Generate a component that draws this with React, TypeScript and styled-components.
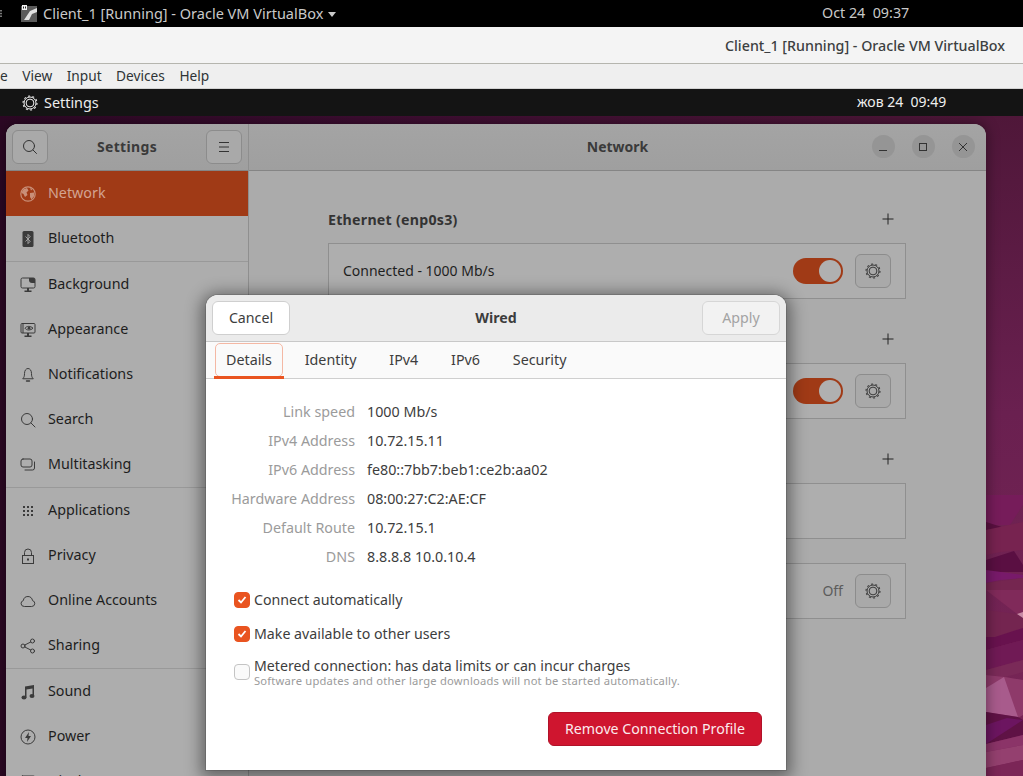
import React from "react";
import styled, { createGlobalStyle } from "styled-components";

const Global = createGlobalStyle`
  html, body { margin: 0; padding: 0; background: #000; overflow: hidden; }
  * { box-sizing: border-box; }
  body { font-family: "Noto Sans", "Liberation Sans", sans-serif; font-size: 14px; }
`;

const Screen = styled.div`
  width: 1023px; height: 776px; overflow: hidden;
  display: flex; flex-direction: column;
`;
const HostBar = styled.div`
  height: 27px; flex: none; background: #000; color: #c9c9c9;
  display: flex; align-items: center; position: relative;
  font-size: 14.5px; padding-left: 21px;
`;
const EdgeDots = styled.svg`position: absolute; left: 0; top: 10px; width: 2px; height: 7px;`;
const HostTitle = styled.span`margin: 0 0 2px 6px; white-space: nowrap;`;
const HostClock = styled.span`
  position: absolute; left: 822px; top: 3px; font-size: 14.3px; white-space: pre;
`;
const Caret = styled.span`
  width: 0; height: 0; margin-left: 5px; margin-top: 1px;
  border-left: 4.5px solid transparent; border-right: 4.5px solid transparent; border-top: 5px solid #c9c9c9;
`;
const TitleBar = styled.div`
  height: 37px; flex: none; background: #f4f4f4; border-bottom: 1px solid #b5b5ae;
  display: flex; align-items: center; justify-content: flex-end; padding-right: 18px;
  color: #3c3f41; font-size: 14.25px; font-weight: 500;
`;
const MenuBar = styled.div`
  height: 25px; flex: none; background: #efefef; border-bottom: 1px solid #d2d2d2;
  display: flex; align-items: center; gap: 14.5px; color: #2e3436; font-size: 13.7px;
  overflow: hidden; padding-bottom: 2px;
`;
const GuestBar = styled.div`
  height: 27px; flex: none; background: #141414; color: #eee; position: relative;
  display: flex; align-items: center; padding-left: 22px; gap: 6px; font-size: 14.4px;
`;
const GuestClock = styled.span`
  position: absolute; left: 857px; top: 3px; font-size: 14px; white-space: pre;
`;
const Desktop = styled.div`
  flex: 1; position: relative; overflow: hidden; padding: 8px 0 0 6px;
  background: linear-gradient(90deg, #2c0824 0%, #3d0d31 35%, #4f1739 95%);
`;
const Wallpaper = styled.svg`
  position: absolute; right: 0; top: 0; width: 37px; height: 660px; display: block;
`;
const Window = styled.div`
  position: relative; width: 980px; height: 700px; background: #ababab;
  border-radius: 12px 12px 0 0; display: flex; overflow: hidden;
  box-shadow: 0 0 14px rgba(0, 0, 0, 0.45);
`;
const Sidebar = styled.div`
  width: 243px; flex: none; background: #adadad; border-right: 1px solid #8f8f8f;
`;
const HeaderBar = styled.div`
  height: 47px; background: linear-gradient(#a4a4a4, #9f9f9f); border-bottom: 1px solid #858585;
  display: flex; align-items: center; justify-content: space-between;
  position: relative; color: #3a3a3a; font-weight: 700; font-size: 14px;
`;
const SidebarHeader = styled(HeaderBar)`padding: 0 6px;`;
const MainHeader = styled(HeaderBar)`justify-content: center;`;
const HeaderTitle = styled.span`
  position: absolute; left: 0; right: 0; margin-top: -2px; text-align: center; pointer-events: none;
  letter-spacing: 0.35px;
`;
const MainHeaderTitle = styled(HeaderTitle)`left: 0; letter-spacing: 0;`;
const IconButton = styled.div`
  width: 36px; height: 34px; border: 1px solid #8c8c8c; border-radius: 6px;
  background: #a9a9a9; color: #333; flex: none; display: flex; align-items: center; justify-content: center;
`;
const WindowButtons = styled.div`
  position: absolute; right: 11.5px; top: 11px; display: flex; gap: 17px;
`;
const WindowButton = styled.div`
  width: 23px; height: 23px; border-radius: 50%; background: #959595; color: #333;
  display: flex; align-items: center; justify-content: center;
`;
const NavRow = styled.div<{ $active?: boolean }>`
  height: 45px; display: flex; align-items: center; gap: 12px; padding-left: 14px;
  color: ${(p) => (p.$active ? "#d3a391" : "#1d1d1d")};
  background: ${(p) => (p.$active ? "#a03a16" : "transparent")};
  font-size: 14.3px;
  svg { width: 16px; height: 16px; flex: none; color: ${(p) => (p.$active ? "#c98f78" : "#3b3b3b")}; }
`;
const NavLabel = styled.span`margin-bottom: 2px;`;
const NavSeparator = styled.div`height: 1px; background: #999;`;
const Main = styled.div`flex: 1; min-width: 0;`;
const Content = styled.div`padding: 36px 0 0 79px; width: 657px;`;
const Section = styled.div<{ $gap: number }>`margin-bottom: ${(p) => p.$gap}px;`;
const SectionHead = styled.div`
  height: 24px; margin-bottom: 12px; display: flex; align-items: center; justify-content: space-between;
  font-weight: 700; color: #333; font-size: 14.2px; letter-spacing: 0.25px; padding-right: 12px;
`;
const PlusIcon = styled.svg`width: 12px; height: 12px; display: block;`;
const Card = styled.div`
  height: 56px; border: 1px solid #8f8f8f; background: #aeaeae;
  display: flex; align-items: center; justify-content: space-between; padding: 0 14px;
  color: #1f1f1f; font-size: 14px;
`;
const CardLabel = styled.span`margin-bottom: 2px;`;
const CardActions = styled.div`display: flex; align-items: center; gap: 12px;`;
const OffText = styled.span`color: #5c5c5c; margin-bottom: 2px;`;
const Toggle = styled.div`
  width: 50px; height: 26px; border-radius: 13px; background: #a03a16; padding: 2px;
  display: flex; justify-content: flex-end;
`;
const Knob = styled.div`width: 22px; height: 22px; border-radius: 50%; background: #b0b0b0;`;

const Dialog = styled.div`
  position: absolute; left: 206px; top: 179px; width: 580px; height: 475px;
  background: #fff; border-radius: 12px 12px 0 0; color: #3d3d3d;
  box-shadow: 0 3px 16px 5px rgba(0, 0, 0, 0.42), 0 0 0 1px rgba(0, 0, 0, 0.12);
  display: flex; flex-direction: column; overflow: hidden;
`;
const DialogHeader = styled.div`
  height: 47px; flex: none; background: #ebebeb; border-bottom: 1px solid #c8c8c8; position: relative;
  display: flex; align-items: center; justify-content: space-between; padding: 0 6px;
`;
const DialogTitle = styled.span`
  position: absolute; left: 0; right: 0; margin-top: -2px; text-align: center;
  font-weight: 700; font-size: 14.2px; color: #3d3d3d;
`;
const DialogButton = styled.div<{ $disabled?: boolean }>`
  width: 78px; height: 34px; border-radius: 6px; background: ${(p) => (p.$disabled ? "#f2f2f2" : "#fff")};
  border: 1px solid ${(p) => (p.$disabled ? "#d6d6d6" : "#cfcfcf")};
  color: ${(p) => (p.$disabled ? "#a3a3a3" : "#3d3d3d")};
  display: flex; align-items: center; justify-content: center; font-size: 14.2px; padding-bottom: 2px;
`;
const Tabs = styled.div`
  height: 37px; flex: none; background: #fafafa; border-bottom: 1px solid #cfcfcf;
  display: flex; gap: 8.8px; padding-left: 8px;
`;
const Tab = styled.div<{ $active?: boolean }>`
  height: 37px; padding: 0 12px 2px; display: flex; align-items: center; position: relative;
  font-size: 14.3px; color: #3d3d3d;
  ${(p) =>
    p.$active &&
    `
    &::before { content: ""; position: absolute; left: 1px; right: 1px; top: 1px; bottom: 2px;
      border: 1px solid #f4b8a4; border-radius: 5px; }
    &::after { content: ""; position: absolute; left: 0; right: 0; bottom: 0; height: 3px; background: #e95420; }
  `}
`;
const DetailGrid = styled.div`
  display: grid; grid-template-columns: 149px 1fr; column-gap: 12px; grid-auto-rows: 29px;
  align-items: center; padding-top: 18px; font-size: 14.3px;
`;
const DetailLabel = styled.span`text-align: right; color: #9b9b9b;`;
const DetailValue = styled.span`color: #3d3d3d;`;
const Checks = styled.div`margin-top: 12px; padding-left: 28px;`;
const CheckRow = styled.div<{ $tall?: boolean }>`
  height: ${(p) => (p.$tall ? 42 : 34)}px; display: flex; align-items: center; gap: 4px; font-size: 14.2px;
`;
const CheckBox = styled.div<{ $on?: boolean }>`
  width: 16px; height: 16px; border-radius: 4px; flex: none;
  background: ${(p) => (p.$on ? "#e95420" : "#fafafa")};
  border: 1px solid ${(p) => (p.$on ? "#e95420" : "#c4c4c4")};
  display: flex; align-items: center; justify-content: center;
`;
const CheckLabel = styled.span`margin-bottom: 2px;`;
const CheckText = styled.div`display: flex; flex-direction: column; line-height: 15px; margin-top: 2px; font-size: 14.15px;`;
const CheckHint = styled.span`font-size: 11.2px; letter-spacing: 0.2px; color: #9b9b9b;`;
const Footer = styled.div`margin-top: 19px; padding-right: 24px; display: flex; justify-content: flex-end;`;
const DangerButton = styled.div`
  width: 214px; height: 34px; border-radius: 6px; background: #cf152f; border: 1px solid #b01228;
  color: #fbeaed; font-size: 14.2px; display: flex; align-items: center; justify-content: center; padding-bottom: 2px;
`;

const Stroke = ({ children }: { children: React.ReactNode }) => (
  <svg viewBox="0 0 16 16" fill="none" stroke="currentColor" strokeWidth="1" strokeLinecap="round" strokeLinejoin="round">
    {children}
  </svg>
);

const Gear = ({ color = "#3a3a3a" }: { color?: string }) => (
  <svg width="16" height="16" viewBox="0 0 16 16" fill="none" stroke={color}>
    <circle cx="8" cy="8" r="7" strokeWidth="1.1" strokeDasharray="2 2.4" />
    <circle cx="8" cy="8" r="6" strokeWidth="1" />
    <circle cx="8" cy="8" r="3.9" strokeWidth="1" />
  </svg>
);

const Tick = () => (
  <svg width="10" height="10" viewBox="0 0 10 10" fill="none" stroke="#fff" strokeWidth="1.8">
    <path d="M1.5 5 L4 7.5 L8.5 2" />
  </svg>
);

const Plus = () => (
  <PlusIcon viewBox="0 0 12 12" stroke="#222">
    <path d="M6 .5v11M.5 6h11" />
  </PlusIcon>
);

const icons: Record<string, React.ReactNode> = {
  Network: (
    <svg viewBox="0 0 16 16">
      <circle cx="8" cy="8" r="7.2" fill="none" stroke="currentColor" strokeWidth="1.2" />
      <path d="M3 3.5 L7 2 L8.5 4.5 L6.5 6.5 L7.5 9 L5 11 L3.5 8 L1.5 7Z M10 7 L14 6.5 L14.2 10 L11.5 13.5 L10 11Z M10 2 L12.5 3 L11 4.5Z" fill="currentColor" />
    </svg>
  ),
  Bluetooth: (
    <svg viewBox="0 0 16 16">
      <rect x="2.5" y="0" width="11" height="16" rx="1.5" fill="currentColor" />
      <path d="M5.5 5.5 L10.2 10.3 L8 12.6 V3.4 L10.2 5.7 L5.5 10.5" fill="none" stroke="#adadad" strokeWidth="0.9" />
    </svg>
  ),
  Background: (
    <svg viewBox="0 0 16 16">
      <path d="M2.5 1h11A1.5 1.5 0 0 1 15 2.5v7a1.5 1.5 0 0 1-1.5 1.5h-11A1.5 1.5 0 0 1 1 9.5v-7A1.5 1.5 0 0 1 2.5 1Z" fill="none" stroke="currentColor" />
      <path d="M9 1h4.5A1.5 1.5 0 0 1 15 2.5V6h-3a3 3 0 0 1-3-3Z" fill="currentColor" />
      <path d="M7 11h2v2.5H7ZM4.5 13.5h7V15h-7Z" fill="currentColor" />
    </svg>
  ),
  Appearance: (
    <svg viewBox="0 0 16 16">
      <rect x="1" y="1.5" width="14" height="9.5" rx="1" fill="none" stroke="currentColor" />
      <path d="M3 1.5v9.5" stroke="currentColor" strokeDasharray="1 1" strokeWidth="2" />
      <path d="M5 6.2c1.5-2.4 5.5-2.4 8 0c-2.5 2.4-6.5 2.4-8 0Z" fill="none" stroke="currentColor" />
      <circle cx="9" cy="6.2" r="1.4" fill="currentColor" />
      <path d="M7 11h2v2.5H7ZM4.5 13.5h7V15h-7Z" fill="currentColor" />
    </svg>
  ),
  Notifications: (
    <Stroke>
      <path d="M3 11.5c1.2-1.2 1.5-2.5 1.5-5C4.5 3.5 6 1.5 8 1.5s3.5 2 3.5 5c0 2.5.3 3.8 1.5 5Z" />
      <path d="M6.5 14h3" strokeWidth="1.4" />
    </Stroke>
  ),
  Search: (
    <Stroke>
      <circle cx="7" cy="7" r="5.5" />
      <path d="M11 11 L15 15" />
    </Stroke>
  ),
  Multitasking: (
    <Stroke>
      <rect x="1" y="2" width="11" height="8" rx="2" />
      <path d="M14.5 5v6a2 2 0 0 1-2 2H5" />
    </Stroke>
  ),
  Applications: (
    <svg viewBox="0 0 16 16" fill="currentColor">
      {[3, 7, 11].flatMap((y) =>
        [3, 7, 11].map((x) => <rect key={`${x}-${y}`} x={x} y={y} width="2" height="2" />)
      )}
    </svg>
  ),
  Privacy: (
    <svg viewBox="0 0 16 16" fill="none" stroke="currentColor">
      <rect x="2.5" y="7.5" width="11" height="8" />
      <path d="M4.5 7.5V4.5a3.5 3.5 0 0 1 7 0v3" />
      <rect x="7" y="10.5" width="2" height="2" fill="currentColor" stroke="none" />
    </svg>
  ),
  "Online Accounts": (
    <Stroke>
      <path d="M4 13.5a3 3 0 0 1-.7-5.9A4.8 4.8 0 0 1 8 3.5c2.5 0 4.2 1.7 4.5 4.1a3 3 0 0 1-.5 5.9Z" />
    </Stroke>
  ),
  Sharing: (
    <Stroke>
      <circle cx="3" cy="8" r="2" />
      <circle cx="12.5" cy="3" r="2" />
      <circle cx="12.5" cy="13" r="2" />
      <path d="M4.8 7 L10.7 4 M4.8 9 L10.7 12" />
    </Stroke>
  ),
  Sound: (
    <svg viewBox="0 0 16 16" fill="currentColor">
      <path d="M5 2.5 14 1v10.5h-1.5V4.5L6.5 5.5V13.5H5Z" />
      <ellipse cx="4" cy="13.5" rx="2.5" ry="2" />
      <ellipse cx="12" cy="12" rx="2.5" ry="2" />
    </svg>
  ),
  Power: (
    <svg viewBox="0 0 16 16">
      <circle cx="8" cy="8" r="7" fill="none" stroke="currentColor" />
      <path d="M9 3 L5 9 H7.5 L7 13 L11 7 H8.5Z" fill="currentColor" />
    </svg>
  ),
  Displays: (
    <Stroke>
      <rect x="1" y="2" width="14" height="9" rx="1.5" />
    </Stroke>
  ),
};

const navGroups = [
  ["Network", "Bluetooth"],
  ["Background", "Appearance", "Notifications", "Search", "Multitasking"],
  ["Applications", "Privacy", "Online Accounts", "Sharing"],
  ["Sound", "Power", "Displays"],
];

const details: [string, string][] = [
  ["Link speed", "1000 Mb/s"],
  ["IPv4 Address", "10.72.15.11"],
  ["IPv6 Address", "fe80::7bb7:beb1:ce2b:aa02"],
  ["Hardware Address", "08:00:27:C2:AE:CF"],
  ["Default Route", "10.72.15.1"],
  ["DNS", "8.8.8.8 10.0.10.4"],
];

const facets: [string, string][] = [
  ["0,379 37,379 37,389 24,409 0,409", "#761c5a"],
  ["0,406 19,412 0,414", "#5a1040"],
  ["0,414 37,406 37,434 14,436 0,439", "#772350"],
  ["0,444 28,435 37,449 37,456 0,456", "#5a0f42"],
  ["0,454 37,459 37,462 14,464 0,467", "#781a6a"],
  ["0,467 37,462 37,474 0,474", "#752650"],
  ["0,474 37,474 37,499 31,498", "#802a5a"],
  ["0,494 31,498 37,502 37,512 9,521 0,521", "#742550"],
  ["31,498 37,496 37,502", "#c88aa5"],
  ["9,521 37,512 37,524 0,534 0,521", "#68124e"],
  ["0,534 37,524 37,544 0,554", "#701a55"],
  ["0,554 37,544 37,556 19,561 0,559", "#7a2a58"],
  ["0,559 19,561 37,564 37,599 32,602 0,596", "#8e3a6a"],
  ["0,572 18,561 32,601 0,596", "#a85b8c"],
  ["0,596 32,601 37,604 37,619 0,628", "#5f1245"],
  ["0,609 21,602 37,604 0,628", "#6c1560"],
  ["0,628 37,619 37,629 0,636", "#8b3468"],
  ["0,636 37,629 37,644 0,652", "#94406f"],
  ["0,652 37,644 37,660 0,660", "#7b2657"],
];

export default function App() {
  return (
    <Screen>
      <Global />
      <HostBar>
        <EdgeDots viewBox="0 0 2 7" fill="#777">
          <rect width="2" height="1.5" />
          <rect y="2.8" width="2" height="1.5" />
          <rect y="5.5" width="2" height="1.5" />
        </EdgeDots>
        <svg width="16" height="17" viewBox="0 0 16 17">
          <rect x="0" y="1" width="16" height="16" fill="#5a5a5a" />
          <path d="M3 15 L7 9 L9 6 L16 3 V7 L11 9 L8 15Z" fill="#e0e0e0" />
          <rect x="1" y="0" width="5" height="5" fill="#f2f2f2" />
          <rect x="2" y="1.5" width="1" height="2" fill="#222" />
          <rect x="4" y="1.5" width="1" height="2" fill="#222" />
        </svg>
        <HostTitle>Client_1 [Running] - Oracle VM VirtualBox</HostTitle>
        <Caret />
        <HostClock>Oct 24  09:37</HostClock>
      </HostBar>
      <TitleBar>Client_1 [Running] - Oracle VM VirtualBox</TitleBar>
      <MenuBar>
        <span>e</span>
        <span>View</span>
        <span>Input</span>
        <span>Devices</span>
        <span>Help</span>
      </MenuBar>
      <GuestBar>
        <Gear color="#f0f0f0" />
        <span>Settings</span>
        <GuestClock>жов 24  09:49</GuestClock>
      </GuestBar>
      <Desktop>
        <Wallpaper viewBox="0 0 37 660" preserveAspectRatio="none">
          <defs>
            <linearGradient id="wall" x1="0" y1="0" x2="0" y2="1">
              <stop offset="0" stopColor="#4f1739" />
              <stop offset="0.45" stopColor="#6a2050" />
              <stop offset="1" stopColor="#7a2657" />
            </linearGradient>
          </defs>
          <rect width="37" height="660" fill="url(#wall)" />
          {facets.map(([points, fill]) => (
            <polygon key={points} points={points} fill={fill} />
          ))}
        </Wallpaper>
        <Window>
          <Sidebar>
            <SidebarHeader>
              <IconButton>
                <svg width="16" height="16" viewBox="0 0 16 16" fill="none" stroke="currentColor" strokeLinecap="round">
                  <circle cx="7" cy="7" r="5.5" />
                  <path d="M11 11 L14.5 14.5" />
                </svg>
              </IconButton>
              <HeaderTitle>Settings</HeaderTitle>
              <IconButton>
                <svg width="12" height="12" viewBox="0 0 12 12" stroke="currentColor">
                  <path d="M1 1.5h10M1 6h10M1 10.5h10" />
                </svg>
              </IconButton>
            </SidebarHeader>
            {navGroups.map((group, i) => (
              <React.Fragment key={group[0]}>
                {i > 0 && <NavSeparator />}
                {group.map((name) => (
                  <NavRow key={name} $active={name === "Network"}>
                    {icons[name]}
                    <NavLabel>{name}</NavLabel>
                  </NavRow>
                ))}
              </React.Fragment>
            ))}
          </Sidebar>
          <Main>
            <MainHeader>
              <MainHeaderTitle>Network</MainHeaderTitle>
              <WindowButtons>
                <WindowButton>
                  <svg width="12" height="12" viewBox="0 0 12 12" stroke="currentColor"><path d="M2 9.5h8" /></svg>
                </WindowButton>
                <WindowButton>
                  <svg width="12" height="12" viewBox="0 0 12 12" fill="none" stroke="currentColor"><rect x="2.5" y="2.5" width="7" height="7" /></svg>
                </WindowButton>
                <WindowButton>
                  <svg width="12" height="12" viewBox="0 0 12 12" stroke="currentColor"><path d="M2 2 L10 10 M10 2 L2 10" /></svg>
                </WindowButton>
              </WindowButtons>
            </MainHeader>
            <Content>
              <Section $gap={28}>
                <SectionHead>
                  <span>Ethernet (enp0s3)</span>
                  <Plus />
                </SectionHead>
                <Card>
                  <CardLabel>Connected - 1000 Mb/s</CardLabel>
                  <CardActions>
                    <Toggle><Knob /></Toggle>
                    <IconButton><Gear /></IconButton>
                  </CardActions>
                </Card>
              </Section>
              <Section $gap={28}>
                <SectionHead>
                  <span />
                  <Plus />
                </SectionHead>
                <Card>
                  <span />
                  <CardActions>
                    <Toggle><Knob /></Toggle>
                    <IconButton><Gear /></IconButton>
                  </CardActions>
                </Card>
              </Section>
              <Section $gap={24}>
                <SectionHead>
                  <span />
                  <Plus />
                </SectionHead>
                <Card />
              </Section>
              <Section $gap={0}>
                <Card>
                  <span />
                  <CardActions>
                    <OffText>Off</OffText>
                    <IconButton><Gear /></IconButton>
                  </CardActions>
                </Card>
              </Section>
            </Content>
          </Main>
        </Window>
        <Dialog>
          <DialogHeader>
            <DialogButton>Cancel</DialogButton>
            <DialogTitle>Wired</DialogTitle>
            <DialogButton $disabled>Apply</DialogButton>
          </DialogHeader>
          <Tabs>
            <Tab $active>Details</Tab>
            <Tab>Identity</Tab>
            <Tab>IPv4</Tab>
            <Tab>IPv6</Tab>
            <Tab>Security</Tab>
          </Tabs>
          <DetailGrid>
            {details.map(([label, value]) => (
              <React.Fragment key={label}>
                <DetailLabel>{label}</DetailLabel>
                <DetailValue>{value}</DetailValue>
              </React.Fragment>
            ))}
          </DetailGrid>
          <Checks>
            <CheckRow>
              <CheckBox $on><Tick /></CheckBox>
              <CheckLabel>Connect automatically</CheckLabel>
            </CheckRow>
            <CheckRow>
              <CheckBox $on><Tick /></CheckBox>
              <CheckLabel>Make available to other users</CheckLabel>
            </CheckRow>
            <CheckRow $tall>
              <CheckBox />
              <CheckText>
                <span>Metered connection: has data limits or can incur charges</span>
                <CheckHint>Software updates and other large downloads will not be started automatically.</CheckHint>
              </CheckText>
            </CheckRow>
          </Checks>
          <Footer>
            <DangerButton>Remove Connection Profile</DangerButton>
          </Footer>
        </Dialog>
      </Desktop>
    </Screen>
  );
}
